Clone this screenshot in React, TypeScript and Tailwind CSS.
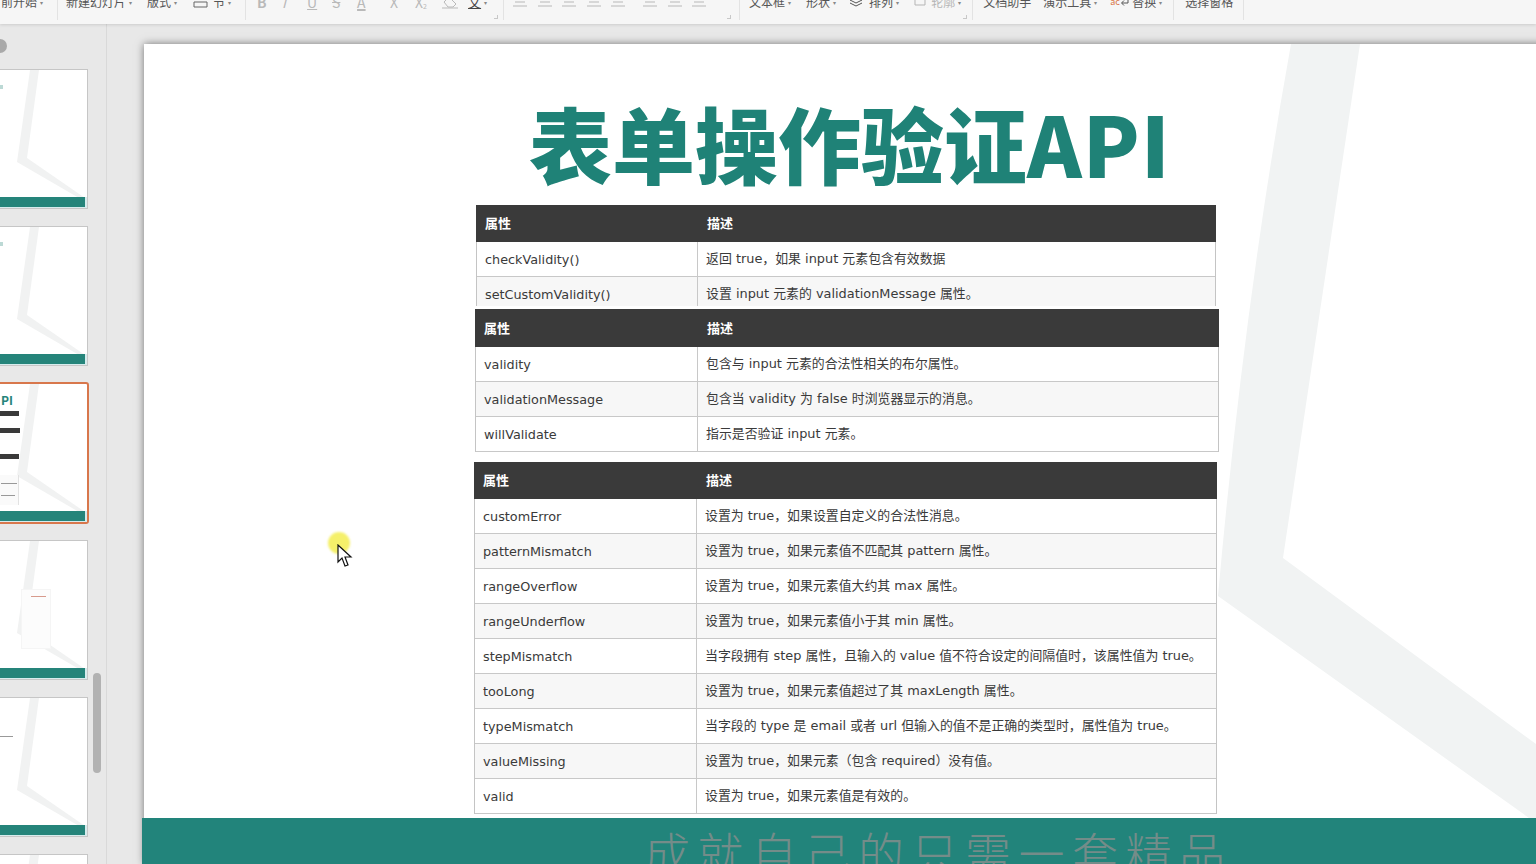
const bodyFont = "font-['DejaVu_Sans','Noto_Sans_CJK_SC',sans-serif]";

type Row = [string, string];

function Table({ rows, className, colClass, headClass, descPad }: { rows: Row[]; className: string; colClass: string; headClass: string; descPad: string }) {
  return (
    <div className={`absolute overflow-hidden bg-white ${bodyFont} ${className}`}>
      <div className={`flex items-center bg-[#3a3a3a] pt-[1px] text-[13px] font-bold text-white ${headClass}`}>
        <div className={`${colClass} shrink-0 pl-[9px]`}>属性</div>
        <div className={descPad}>描述</div>
      </div>
      <div className="border-x border-[#c4c4c4]">
        {rows.map(([name, desc], i) => (
          <div
            key={name}
            className={`flex h-[35px] items-center border-b border-[#c8c8c8] text-[12.8px] leading-none text-[#3a3a3a] ${i % 2 ? "bg-[#f7f7f7]" : "bg-white"}`}
          >
            <div className={`${colClass} flex h-full shrink-0 items-center border-r border-[#c8c8c8] pl-[8px] pt-[2px]`}>{name}</div>
            <div className="whitespace-nowrap pl-[8px] pt-[1px] text-[12.9px]">{desc}</div>
          </div>
        ))}
      </div>
    </div>
  );
}

function ThumbDecor() {
  return (
    <div className="absolute inset-0 overflow-hidden">
      <svg className="absolute right-0 top-0 h-[140px] w-[88px]" viewBox="0 0 88 140">
        <polygon points="31,0 40,0 28,88 86,128 80,128 18,92" fill="#f1f2f2" />
      </svg>
    </div>
  );
}

function Thumb({ children, selected }: { children?: React.ReactNode; selected?: boolean }) {
  return (
    <div
      className={
        selected
          ? "relative -mr-px h-[142px] w-[150px] shrink-0 self-end rounded-[3px] border-2 border-[#d8774c] bg-white"
          : "relative h-[140px] w-[150px] shrink-0 self-end border border-[#c6c6c6] bg-white"
      }
    >
      <ThumbDecor />
      {children}
      <div className="absolute bottom-0 left-0 right-0 h-[11px] border-b border-r-2 border-[#d6eced] bg-[#25847a] bg-clip-padding" />
    </div>
  );
}

function Tb({ children, className = "", dim, caret }: { children: React.ReactNode; className?: string; dim?: boolean; caret?: boolean }) {
  return (
    <div className={`flex shrink-0 items-center whitespace-nowrap ${dim ? "text-[#b5b5b5]" : "text-[#555555]"} ${className}`}>
      {children}
      {caret && <span className="ml-[3px] text-[6px] text-[#888888]">▾</span>}
    </div>
  );
}

function Sep({ className }: { className: string }) {
  return <div className={`mt-[10px] h-[26px] w-px shrink-0 bg-[#e3e3e3] ${className}`} />;
}

function AlignIcon({ className }: { className: string }) {
  return (
    <svg className={`shrink-0 ${className}`} width="14" height="12" viewBox="0 0 14 12" stroke="#b8b8b8" fill="none">
      <path d="M0 2h14M2 6h10M0 10h14" />
    </svg>
  );
}

function Launcher({ className }: { className: string }) {
  return <div className={`absolute top-[15px] h-[4px] w-[4px] border-b border-r border-[#c8c8c8] ${className}`} />;
}

const t1: Row[] = [
  ["checkValidity()", "返回 true，如果 input 元素包含有效数据"],
  ["setCustomValidity()", "设置 input 元素的 validationMessage 属性。"],
];
const t2: Row[] = [
  ["validity", "包含与 input 元素的合法性相关的布尔属性。"],
  ["validationMessage", "包含当 validity 为 false 时浏览器显示的消息。"],
  ["willValidate", "指示是否验证 input 元素。"],
];
const t3: Row[] = [
  ["customError", "设置为 true，如果设置自定义的合法性消息。"],
  ["patternMismatch", "设置为 true，如果元素值不匹配其 pattern 属性。"],
  ["rangeOverflow", "设置为 true，如果元素值大约其 max 属性。"],
  ["rangeUnderflow", "设置为 true，如果元素值小于其 min 属性。"],
  ["stepMismatch", "当字段拥有 step 属性，且输入的 value 值不符合设定的间隔值时，该属性值为 true。"],
  ["tooLong", "设置为 true，如果元素值超过了其 maxLength 属性。"],
  ["typeMismatch", "当字段的 type 是 email 或者 url 但输入的值不是正确的类型时，属性值为 true。"],
  ["valueMissing", "设置为 true，如果元素（包含 required）没有值。"],
  ["valid", "设置为 true，如果元素值是有效的。"],
];

export default function App() {
  return (
    <div className="flex h-[864px] w-[1536px] flex-col overflow-hidden bg-[#e8e8e8] font-['Noto_Sans_CJK_SC',sans-serif]">
      <header className="relative z-10 h-[24px] shrink-0 overflow-hidden bg-[#f6f6f6] shadow-[0_1px_3px_rgba(0,0,0,0.12)]">
        <div className="-mt-[8px] flex h-[20px] items-center text-[12px]">
          <Tb caret className="ml-[1px]">前开始</Tb>
          <Sep className="ml-[14px]" />
          <Tb caret className="ml-[8px]">新建幻灯片</Tb>
          <Tb caret className="ml-[15px]">版式</Tb>
          <Tb className="ml-[16px]">
            <svg width="15" height="12" viewBox="0 0 15 12" fill="none" stroke="#666666"><path d="M1 2h13M1 6h13v5H1z" /></svg>
          </Tb>
          <Tb caret className="ml-[5px]">节</Tb>
          <Sep className="ml-[14px]" />
          <div className="ml-[11px] flex items-center text-[14px] text-[#b9b9b9]">
            <span className="w-[25px] font-bold">B</span>
            <span className="w-[25px] italic">I</span>
            <span className="w-[25px] underline">U</span>
            <span className="w-[25px] line-through">S</span>
            <span className="w-[33px] underline decoration-2">A</span>
            <span className="w-[25px]">X</span>
            <span className="w-[27px]">X<sub className="text-[7px]">2</sub></span>
            <span className="w-[26px]">
              <svg width="16" height="14" viewBox="0 0 16 14" fill="none" stroke="#b9b9b9"><path d="M2 7l5-5 7 7-3 3H6zM0 13h16" /></svg>
            </span>
            <span className="text-[13px] text-[#444444] underline">文</span>
            <span className="ml-[3px] text-[6px] text-[#888888]">▾</span>
          </div>
          <Sep className="ml-[16px]" />
          <AlignIcon className="ml-[9px]" />
          <AlignIcon className="ml-[11px]" />
          <AlignIcon className="ml-[10px]" />
          <AlignIcon className="ml-[11px]" />
          <AlignIcon className="ml-[10px]" />
          <AlignIcon className="ml-[18px]" />
          <AlignIcon className="ml-[11px]" />
          <AlignIcon className="ml-[10px]" />
          <Sep className="ml-[33px]" />
          <Tb caret className="ml-[9px]">文本框</Tb>
          <Tb caret className="ml-[15px]">形状</Tb>
          <Tb caret className="ml-[13px]">
            <svg className="mr-[6px]" width="14" height="12" viewBox="0 0 14 12" fill="none" stroke="#555555"><path d="M7 1l6 3-6 3-6-3zM1 7l6 3 6-3" /></svg>
            排列
          </Tb>
          <Tb caret dim className="ml-[14px]">
            <svg className="mr-[4px]" width="14" height="12" viewBox="0 0 14 12" fill="none" stroke="#b5b5b5"><path d="M2 1h10v8H2z" /></svg>
            轮廓
          </Tb>
          <Sep className="ml-[11px]" />
          <Tb className="ml-[10px]">文档助手</Tb>
          <Tb caret className="ml-[12px]">演示工具</Tb>
          <Tb caret className="ml-[13px]">
            <span className="flex w-[22px] items-center text-[9px] text-[#d9764a]">
              ac
              <svg width="10" height="10" viewBox="0 0 10 10" fill="none" stroke="#555555"><path d="M8 1v5H2M4 3.5L1.5 6 4 8.5" /></svg>
            </span>
            替换
          </Tb>
          <Sep className="ml-[11px]" />
          <Tb className="ml-[11px]">选择窗格</Tb>
          <Sep className="ml-[10px]" />
        </div>
        <Launcher className="left-[494px]" />
        <Launcher className="left-[727px]" />
        <Launcher className="left-[963px]" />
      </header>

      <main className="flex min-h-0 flex-1">
        <aside className="relative flex w-[107px] shrink-0 flex-col gap-[17px] overflow-hidden border-r border-[#d9d9d9] pr-[18px] pt-[45px]">
          <div className="absolute -left-[7px] top-[15px] h-[14px] w-[14px] rounded-full bg-[#a9a9a9]" />
          <Thumb>
            <div className="absolute left-[61px] top-[15px] h-[4px] w-[3px] bg-[#bcd9d5]" />
          </Thumb>
          <Thumb>
            <div className="absolute left-[61px] top-[15px] h-[4px] w-[3px] bg-[#bcd9d5]" />
          </Thumb>
          <div className="-my-px flex self-end">
            <Thumb selected>
              <div className="absolute left-[60px] top-[8px] text-[12px] font-bold leading-[16px] text-[#25847a]">PI</div>
              <div className="absolute left-[48px] top-[27px] h-[5px] w-[30px] bg-[#3a3a3a]" />
              <div className="absolute left-[48px] top-[44px] h-[5px] w-[31px] bg-[#3a3a3a]" />
              <div className="absolute left-[48px] top-[70px] h-[5px] w-[30px] bg-[#3a3a3a]" />
              <div className="absolute left-[48px] top-[91px] h-[30px] w-[30px] border-r border-[#e2e2e2] bg-[#fafafa]">
                <div className="ml-[12px] mt-[8px] h-px w-[16px] bg-[#999999]" />
                <div className="ml-[12px] mt-[11px] h-px w-[14px] bg-[#999999]" />
              </div>
            </Thumb>
          </div>
          <Thumb>
            <div className="absolute left-[82px] top-[48px] h-[60px] w-[30px] border border-[#f5f5f5] bg-[#fcfcfc]">
              <div className="ml-[9px] mt-[6px] h-px w-[15px] bg-[#d79a8c]" />
            </div>
          </Thumb>
          <Thumb>
            <div className="absolute left-[61px] top-[38px] h-px w-[13px] bg-[#999999]" />
          </Thumb>
          <Thumb />
          <div className="absolute left-[93px] top-[649px] h-[100px] w-[8px] rounded-full bg-[#b2b2b2]" />
        </aside>

        <section className="relative min-w-0 flex-1 overflow-hidden pl-[37px] pt-[20px]">
          <div className="relative h-[820px] w-[1500px] bg-white shadow-[0_0_8px_rgba(0,0,0,0.5)]">
            <svg className="absolute left-0 top-0 h-[820px] w-[1392px]" viewBox="0 0 1392 820">
              <path d="M1147 0H1216L1139 514 1392 700V774H1385L1074 552Q1100 260 1147 0Z" fill="#f1f3f3" />
            </svg>

            <h1 className="absolute left-[385px] top-[33px] whitespace-nowrap text-[83px] font-black leading-[130px] text-[#1f8277]">
              表单操作验证<span className="tracking-[1px]">API</span>
            </h1>

            <Table rows={t1} colClass="w-[221px]" headClass="h-[37px]" descPad="pl-[10px]" className="left-[332px] top-[161px] h-[101px] w-[740px]" />
            <Table rows={t2} colClass="w-[222px]" headClass="h-[38px]" descPad="pl-[10px]" className="left-[331px] top-[265px] w-[744px]" />
            <Table rows={t3} colClass="w-[222px]" headClass="h-[37px]" descPad="pl-[10px]" className="left-[330px] top-[418px] w-[743px]" />

            <div className="absolute -left-[2px] top-[774px] flex h-[46px] w-[1400px] justify-start overflow-hidden bg-[#22847b] pl-[502px] pt-[5px]">
              <span className="whitespace-nowrap text-[46px] font-light leading-[56px] tracking-[7.5px] text-[#748c89]">
                成就自己的只需一套精品
              </span>
            </div>

            <div className="absolute left-[184px] top-[488px] h-[22px] w-[22px] rounded-full bg-[#f5f06a] blur-[1px]" />
            <svg className="absolute left-[193px] top-[500px]" width="16" height="24" viewBox="0 0 16 24">
              <path d="M1 1V18L5 14 8 22 11 21 8 13H14Z" fill="#ffffff" stroke="#111111" strokeWidth="1.2" />
            </svg>
          </div>
        </section>
      </main>
    </div>
  );
}
